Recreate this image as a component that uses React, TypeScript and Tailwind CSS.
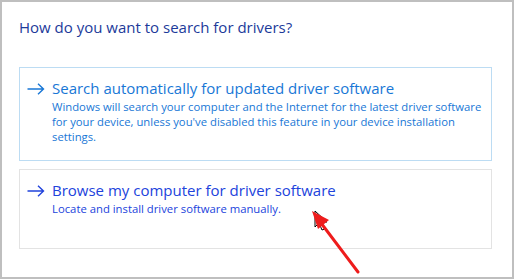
const Arrow = ({ color }: { color: string }) => (
  <svg width="18" height="12" viewBox="0 0 18 12" className="shrink-0" fill="none">
    <path d="M0.5 6H16.5M11 0.8L16.5 6L11 11.2" stroke={color} strokeWidth="1.4" />
  </svg>
);

const Option = ({
  title,
  desc,
  titleColor,
  border,
  height,
}: {
  title: string;
  desc: string;
  titleColor: string;
  border: string;
  height: string;
}) => (
  <div className={`flex gap-[7px] border pl-[7px] pr-1 pt-[10px] ${border} ${height}`}>
    <div className="pt-[5px]">
      <Arrow color={titleColor} />
    </div>
    <div>
      <p className="text-[15px] leading-[21px]" style={{ color: titleColor }}>
        {title}
      </p>
      <p className="text-[11.3px] leading-[15px]" style={{ color: titleColor }}>
        {desc}
      </p>
    </div>
  </div>
);

export default function App() {
  return (
    <div
      className="relative box-border h-[279px] w-[514px] border-2 border-[#bfbfbf] bg-white"
      style={{ fontFamily: '"Open Sans", "Noto Sans", sans-serif' }}
    >
      <div className="flex flex-col pl-[17px] pr-5 pt-[15px]">
        <h1 className="text-[15px] leading-5 text-[#1c3a9a]">How do you want to search for drivers?</h1>
        <div className="mt-[30px] flex flex-col gap-2">
          <Option
            title="Search automatically for updated driver software"
            desc="Windows will search your computer and the Internet for the latest driver software for your device, unless you've disabled this feature in your device installation settings."
            titleColor="#1877d6"
            border="border-[#bcdcf3]"
            height="h-[94px]"
          />
          <Option
            title="Browse my computer for driver software"
            desc="Locate and install driver software manually."
            titleColor="#2143dc"
            border="border-[#e3e3e3]"
            height="h-[80px]"
          />
        </div>
      </div>

      {/* mouse cursor */}
      <svg className="absolute left-[312px] top-[208px]" width="14" height="22" viewBox="0 0 14 22">
        <path d="M1 1V17L5 13L8 20L10.5 19L7.5 12H13Z" fill="#fff" stroke="#000" strokeWidth="1" />
      </svg>

      {/* red annotation arrow */}
      <svg className="absolute left-[300px] top-[200px]" width="70" height="79" viewBox="0 0 70 79">
        <path d="M56 70L19 21" stroke="#ee1c1c" strokeWidth="3" strokeLinecap="round" />
        <path d="M10 9L27 18L16 27Z" fill="#ee1c1c" />
      </svg>
    </div>
  );
}
